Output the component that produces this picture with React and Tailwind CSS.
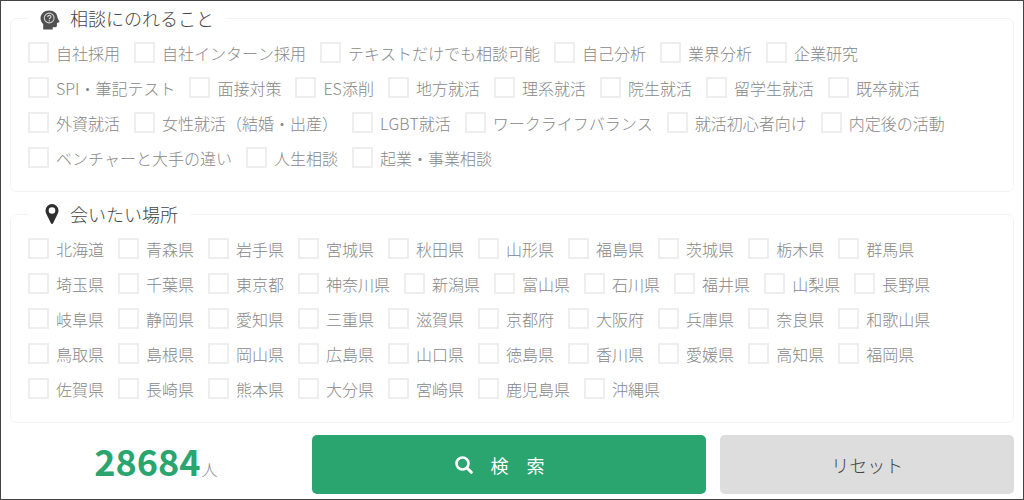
import { useState } from 'react';

const topics = [
  '自社採用', '自社インターン採用', 'テキストだけでも相談可能', '自己分析', '業界分析', '企業研究',
  'SPI・筆記テスト', '面接対策', 'ES添削', '地方就活', '理系就活', '院生就活', '留学生就活', '既卒就活',
  '外資就活', '女性就活（結婚・出産）', 'LGBT就活', 'ワークライフバランス', '就活初心者向け', '内定後の活動',
  'ベンチャーと大手の違い', '人生相談', '起業・事業相談',
];

const places = [
  '北海道', '青森県', '岩手県', '宮城県', '秋田県', '山形県', '福島県', '茨城県', '栃木県', '群馬県',
  '埼玉県', '千葉県', '東京都', '神奈川県', '新潟県', '富山県', '石川県', '福井県', '山梨県', '長野県',
  '岐阜県', '静岡県', '愛知県', '三重県', '滋賀県', '京都府', '大阪府', '兵庫県', '奈良県', '和歌山県',
  '鳥取県', '島根県', '岡山県', '広島県', '山口県', '徳島県', '香川県', '愛媛県', '高知県', '福岡県',
  '佐賀県', '長崎県', '熊本県', '大分県', '宮崎県', '鹿児島県', '沖縄県',
];

function HeadIcon() {
  return (
    <svg viewBox="0 0 20 20" className="mt-1 h-5 w-5" aria-hidden="true">
      <path
        d="M9.2 0.5C4.200 0.500 0.500 4 0.500 8.200c0 2.600 1.200 4.300 2.700 5.900v5.300h9.500v-2.200h2.600c1 0 1.600-.6 1.600-1.600v-2.600l2.200-.7c.4-.2.5-.5.3-.9l-1.800-3.500C17.300 3.500 14 0.500 9.200 0.500z"
        fill="#505050"
      />
      <circle cx="9.200" cy="8" r="4.900" fill="none" stroke="#d0d0d0" strokeWidth="1.100" />
      <path d="M7.700 7.100c0-2.200 3.200-2.200 3.200-.2 0 1.200-1.600 1.200-1.600 2.400" fill="none" stroke="#d0d0d0" strokeWidth="1.200" />
      <circle cx="9.300" cy="10.700" r="0.700" fill="#d0d0d0" />
    </svg>
  );
}

function PinIcon() {
  return (
    <svg viewBox="-5 0 20 20" className="h-5 w-5" aria-hidden="true">
      <path
        fillRule="evenodd"
        d="M7 0a6.500 6.500 0 0 0-6.500 6.500c0 1.300.3 2.200.8 3.200l4.600 9.500c.5.900 1.700.9 2.200 0l4.600-9.500c.5-1 .8-1.900.8-3.200A6.500 6.500 0 0 0 7 0zm0 3.200a3.300 3.300 0 1 1 0 6.600 3.300 3.300 0 0 1 0-6.600z"
        fill="#2e2e2e"
      />
    </svg>
  );
}

function SearchIcon() {
  return (
    <svg viewBox="0 0 18 18" className="h-[18px] w-[18px]" fill="none" stroke="currentColor" aria-hidden="true">
      <circle cx="7.500" cy="7.500" r="6" strokeWidth="2.600" />
      <path d="M12 12l4.300 4.300" strokeWidth="3" strokeLinecap="round" />
    </svg>
  );
}

function CheckGroup({ icon, title, items, selected, onToggle }) {
  return (
    <fieldset className="rounded-md border border-[#f3f3f3] px-[17px] pt-[10px] pb-[23px]">
      <legend className="flex h-7 items-center gap-2.5 px-3 text-lg text-[#444]">
        {icon}
        {title}
      </legend>
      <div className="flex flex-wrap gap-x-3.5 gap-y-3.5">
        {items.map((item) => (
          <label key={item} className="flex h-[21px] items-center gap-[7px] whitespace-nowrap">
            <input
              type="checkbox"
              checked={selected.includes(item)}
              onChange={() => onToggle(item)}
              className="h-[21px] w-[21px] appearance-none border-2 border-[#eee] bg-white checked:bg-[#2aa570]"
            />
            {item}
          </label>
        ))}
      </div>
    </fieldset>
  );
}

export default function App() {
  const [selected, setSelected] = useState([]);

  const toggle = (item) => {
    setSelected((prev) =>
      prev.includes(item) ? prev.filter((i) => i !== item) : [...prev, item]
    );
  };

  return (
    <form
      className="min-h-screen border border-[#444] bg-white px-[9px] pt-[3px] pb-1 font-['Noto_Sans_CJK_JP',sans-serif] text-base font-light text-[#888] [font-kerning:none]"
      onSubmit={(e) => e.preventDefault()}
    >
      <div className="flex flex-col gap-2">
        <CheckGroup icon={<HeadIcon />} title="相談にのれること" items={topics} selected={selected} onToggle={toggle} />
        <CheckGroup icon={<PinIcon />} title="会いたい場所" items={places} selected={selected} onToggle={toggle} />
      </div>

      {/* 検索ボタン */}
      <div className="mt-3 grid grid-cols-[287fr_394fr_293fr] gap-3.5">
        <p className="flex items-baseline justify-center gap-px pl-1 leading-[50px]">
          <strong className="text-4xl leading-[50px] font-bold text-[#2aa570]">28684</strong>
          人
        </p>
        <button
          type="submit"
          className="flex h-[59px] items-center justify-center gap-[17px] rounded-[5px] bg-[#2aa570] pr-[18px] text-lg font-normal text-white"
        >
          <SearchIcon />
          <span className="flex gap-[18px]">
            <span>検</span>
            <span>索</span>
          </span>
        </button>
        <button
          type="button"
          onClick={() => setSelected([])}
          className="h-[59px] rounded-[5px] bg-[#ddd] text-lg text-[#444]"
        >
          リセット
        </button>
      </div>
    </form>
  );
}
